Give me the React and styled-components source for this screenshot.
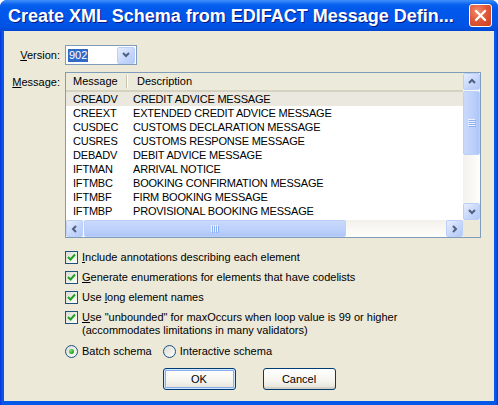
import React from "react";
import styled, { createGlobalStyle } from "styled-components";

const GlobalStyle = createGlobalStyle`
  html, body { margin: 0; padding: 0; background: #ffffff; }
  body { font-family: "Liberation Sans", Arial, sans-serif; }
`;

const messages = [
  ["CREADV", "CREDIT ADVICE MESSAGE"],
  ["CREEXT", "EXTENDED CREDIT ADVICE MESSAGE"],
  ["CUSDEC", "CUSTOMS DECLARATION MESSAGE"],
  ["CUSRES", "CUSTOMS RESPONSE MESSAGE"],
  ["DEBADV", "DEBIT ADVICE MESSAGE"],
  ["IFTMAN", "ARRIVAL NOTICE"],
  ["IFTMBC", "BOOKING CONFIRMATION MESSAGE"],
  ["IFTMBF", "FIRM BOOKING MESSAGE"],
  ["IFTMBP", "PROVISIONAL BOOKING MESSAGE"],
];

const Window = styled.div`
  width: 498px;
  height: 405px;
  display: flex;
  flex-direction: column;
  background: linear-gradient(to right, #0831d9 0, #0558e8 2px, #0558e8 496px, #0831d9 100%);
  border-radius: 7px 7px 0 0;
  overflow: hidden;
`;

const TitleBar = styled.div`
  height: 31px;
  flex: none;
  display: flex;
  align-items: center;
  justify-content: space-between;
  padding: 0 6px 0 8px;
  background: linear-gradient(
    to bottom,
    #3d8ffb 0%,
    #2b7ef6 6%,
    #0a62ee 14%,
    #0058ec 30%,
    #0055e8 70%,
    #0052e2 88%,
    #0046d2 100%
  );
`;

const Title = styled.div`
  color: #ffffff;
  font: bold 18px "Liberation Sans", Arial, sans-serif;
  text-shadow: 1px 1px 0 #0a1883;
  white-space: nowrap;
  padding-top: 1px;
`;

const CloseButton = styled.div`
  width: 21px;
  height: 21px;
  display: flex;
  align-items: center;
  justify-content: center;
  border: 1px solid #ffffff;
  border-radius: 3px;
  background: radial-gradient(circle at 35% 30%, #f08f6f 0%, #e2593a 45%, #c9401f 100%);
`;

const Body = styled.div`
  flex: 1;
  margin: 0 4px 4px;
  background: #ece9d8;
  padding: 14px 13px 0 0;
  display: grid;
  grid-template-columns: 61px 1fr;
  align-content: start;
  font-size: 11px;
  line-height: 13px;
  color: #000000;
`;

const FieldLabel = styled.div`
  text-align: right;
  padding-right: 5px;
  align-self: ${(p) => (p.$top ? "start" : "center")};
  padding-top: ${(p) => (p.$top ? "4px" : "0")};
  margin-top: ${(p) => (p.$top ? "7px" : "0")};
`;

const Combo = styled.div`
  width: 72px;
  height: 20px;
  box-sizing: border-box;
  border: 1px solid #7f9db9;
  background: #ffffff;
  display: flex;
  align-items: center;
  padding: 0 1px 0 2px;
`;

const Selected = styled.span`
  background: #316ac5;
  color: #ffffff;
  padding: 0 1px;
`;

const ArrowButton = styled.div`
  width: ${(p) => p.$w || 17}px;
  height: ${(p) => p.$h || 17}px;
  box-sizing: border-box;
  margin-left: ${(p) => (p.$push ? "auto" : "0")};
  flex: none;
  display: flex;
  align-items: center;
  justify-content: center;
  border: 1px solid #bccff8;
  border-radius: 2px;
  background: linear-gradient(135deg, #e6eefd 0%, #c7d7fb 55%, #b4c9f8 100%);
`;

const ListBox = styled.div`
  margin-top: 7px;
  width: 416px;
  height: 166px;
  box-sizing: border-box;
  border: 1px solid #7f9db9;
  background: #ffffff;
  display: grid;
  grid-template-columns: 1fr 17px;
  grid-template-rows: 1fr 17px;
  overflow: hidden;
`;

const ListContent = styled.div`
  display: flex;
  flex-direction: column;
  overflow: hidden;
`;

const Header = styled.div`
  height: 19px;
  box-sizing: border-box;
  flex: none;
  display: flex;
  align-items: center;
  background: #ebeadb;
  border-bottom: 2px solid #d6d2c2;
`;

const HeaderCell = styled.div`
  width: ${(p) => (p.$w ? `${p.$w}px` : "auto")};
  box-sizing: border-box;
  padding-left: ${(p) => p.$pad}px;
  height: 13px;
  border-right: ${(p) => (p.$w ? "1px solid #c7c5b2" : "none")};
  box-shadow: ${(p) => (p.$w ? "1px 0 0 #ffffff" : "none")};
`;

const Row = styled.div`
  height: 14px;
  flex: none;
  display: flex;
  align-items: center;
  background: ${(p) => (p.$sel ? "#ebe9df" : "#ffffff")};
  white-space: nowrap;
  letter-spacing: -0.2px;
`;

const Cell = styled.div`
  width: ${(p) => (p.$w ? `${p.$w}px` : "auto")};
  padding-left: 7px;
  box-sizing: border-box;
  flex: none;
`;

const VScroll = styled.div`
  display: flex;
  flex-direction: column;
  background: linear-gradient(to right, #f3f1ec, #fefefb);
`;

const HScroll = styled.div`
  display: flex;
  background: linear-gradient(to bottom, #f3f1ec, #fefefb);
`;

const Track = styled.div`
  flex: 1;
`;

const Thumb = styled.div`
  box-sizing: border-box;
  flex: none;
  display: flex;
  align-items: center;
  justify-content: center;
  border: 1px solid #bccff8;
  border-radius: 2px;
  width: ${(p) => (p.$v ? "17px" : "262px")};
  height: ${(p) => (p.$v ? "64px" : "17px")};
  margin: ${(p) => (p.$v ? "1px 0 0" : "0 0 0 1px")};
  background: ${(p) =>
    p.$v
      ? "linear-gradient(to right, #cad9fc, #bcd0fb 60%, #aec6f7)"
      : "linear-gradient(to bottom, #cad9fc, #bcd0fb 60%, #aec6f7)"};
`;

const Corner = styled.div`
  background: #ece9d8;
`;

const Options = styled.div`
  grid-column: 2;
  margin-top: 13px;
  display: flex;
  flex-direction: column;
  gap: 7px;
`;

const CheckRow = styled.label`
  display: flex;
  align-items: flex-start;
  gap: 4px;
`;

const Box = styled.span`
  width: 13px;
  height: 13px;
  box-sizing: border-box;
  flex: none;
  border: 1px solid #1c5180;
  background: linear-gradient(135deg, #dcdcd7 0%, #f0f0ea 60%, #ffffff 100%);
  display: flex;
  align-items: center;
  justify-content: center;
`;

const RadioRow = styled.div`
  margin-top: 1px;
  display: flex;
  align-items: center;
  gap: 11px;
`;

const Radio = styled.span`
  width: 13px;
  height: 13px;
  box-sizing: border-box;
  flex: none;
  border: 1px solid #1c5180;
  border-radius: 50%;
  background: linear-gradient(135deg, #dcdcd7 0%, #f0f0ea 60%, #ffffff 100%);
  display: flex;
  align-items: center;
  justify-content: center;
  &::after {
    content: "";
    display: ${(p) => (p.$on ? "block" : "none")};
    width: 5px;
    height: 5px;
    border-radius: 50%;
    background: radial-gradient(circle at 35% 35%, #7be07a, #1aa81a 70%);
  }
`;

const Buttons = styled.div`
  grid-column: 1 / -1;
  margin: 10px -13px 0 0;
  display: flex;
  justify-content: center;
  gap: 27px;
`;

const Button = styled.div`
  width: 73px;
  height: 22px;
  box-sizing: border-box;
  border: 1px solid #003c74;
  border-radius: 3px;
  display: flex;
  align-items: center;
  justify-content: center;
  background: linear-gradient(to bottom, #ffffff 0%, #f5f4ef 60%, #e3e1d5 100%);
  box-shadow: ${(p) =>
    p.$default
      ? "inset 0 0 0 1px #cee7ff, inset 0 0 0 2px #89adf0"
      : "inset 0 -2px 0 #d6d0c5"};
`;

const Chevron = ({ dir }) => {
  const pts = {
    up: "1,5 4,2 7,5",
    down: "1,2 4,5 7,2",
    left: "5,1 2,4 5,7",
    right: "2,1 5,4 2,7",
  }[dir];
  return (
    <svg width="8" height="8" viewBox="0 0 8 8">
      <polyline points={pts} fill="none" stroke="#4d6185" strokeWidth="2" />
    </svg>
  );
};

const Grip = ({ v }) => (
  <svg width="8" height="8" viewBox="0 0 8 8">
    {[0, 2, 4, 6].map((o) =>
      v ? (
        <g key={o}>
          <line x1="0" y1={o + 0.5} x2="7" y2={o + 0.5} stroke="#eef4fe" />
          <line x1="1" y1={o + 1.5} x2="8" y2={o + 1.5} stroke="#8cb0f8" />
        </g>
      ) : (
        <g key={o}>
          <line x1={o + 0.5} y1="0" x2={o + 0.5} y2="7" stroke="#eef4fe" />
          <line x1={o + 1.5} y1="1" x2={o + 1.5} y2="8" stroke="#8cb0f8" />
        </g>
      )
    )}
  </svg>
);

const Check = () => (
  <Box>
    <svg width="9" height="9" viewBox="0 0 9 9">
      <polyline points="1,4 3.5,6.5 8,1.5" fill="none" stroke="#21a121" strokeWidth="2" />
    </svg>
  </Box>
);

export default function App() {
  return (
    <>
      <GlobalStyle />
      <Window>
        <TitleBar>
          <Title>Create XML Schema from EDIFACT Message Defin...</Title>
          <CloseButton>
            <svg width="13" height="13" viewBox="0 0 13 13">
              <path
                d="M2 2 L11 11 M11 2 L2 11"
                stroke="#ffffff"
                strokeWidth="2.4"
                strokeLinecap="round"
              />
            </svg>
          </CloseButton>
        </TitleBar>
        <Body>
          <FieldLabel>
            <u>V</u>ersion:
          </FieldLabel>
          <Combo>
            <Selected>902</Selected>
            <ArrowButton $push $w={18} $h={17}>
              <Chevron dir="down" />
            </ArrowButton>
          </Combo>

          <FieldLabel $top>
            <u>M</u>essage:
          </FieldLabel>
          <ListBox>
            <ListContent>
              <Header>
                <HeaderCell $w={61} $pad={7}>Message</HeaderCell>
                <HeaderCell $pad={10}>Description</HeaderCell>
              </Header>
              {messages.map(([code, desc], i) => (
                <Row key={code} $sel={i === 0}>
                  <Cell $w={60}>{code}</Cell>
                  <Cell>{desc}</Cell>
                </Row>
              ))}
            </ListContent>
            <VScroll>
              <ArrowButton>
                <Chevron dir="up" />
              </ArrowButton>
              <Thumb $v>
                <Grip v />
              </Thumb>
              <Track />
              <ArrowButton>
                <Chevron dir="down" />
              </ArrowButton>
            </VScroll>
            <HScroll>
              <ArrowButton>
                <Chevron dir="left" />
              </ArrowButton>
              <Thumb>
                <Grip />
              </Thumb>
              <Track />
              <ArrowButton>
                <Chevron dir="right" />
              </ArrowButton>
            </HScroll>
            <Corner />
          </ListBox>

          <Options>
            <CheckRow>
              <Check />
              <span>
                <u>I</u>nclude annotations describing each element
              </span>
            </CheckRow>
            <CheckRow>
              <Check />
              <span>
                <u>G</u>enerate enumerations for elements that have codelists
              </span>
            </CheckRow>
            <CheckRow>
              <Check />
              <span>
                Use <u>l</u>ong element names
              </span>
            </CheckRow>
            <CheckRow>
              <Check />
              <span>
                <u>U</u>se &quot;unbounded&quot; for maxOccurs when loop value is 99 or higher
                <br />
                (accommodates limitations in many validators)
              </span>
            </CheckRow>
            <RadioRow>
              <CheckRow as="span">
                <Radio $on />
                <span>Batch schema</span>
              </CheckRow>
              <CheckRow as="span">
                <Radio />
                <span>Interactive schema</span>
              </CheckRow>
            </RadioRow>
          </Options>

          <Buttons>
            <Button $default>OK</Button>
            <Button>Cancel</Button>
          </Buttons>
        </Body>
      </Window>
    </>
  );
}
